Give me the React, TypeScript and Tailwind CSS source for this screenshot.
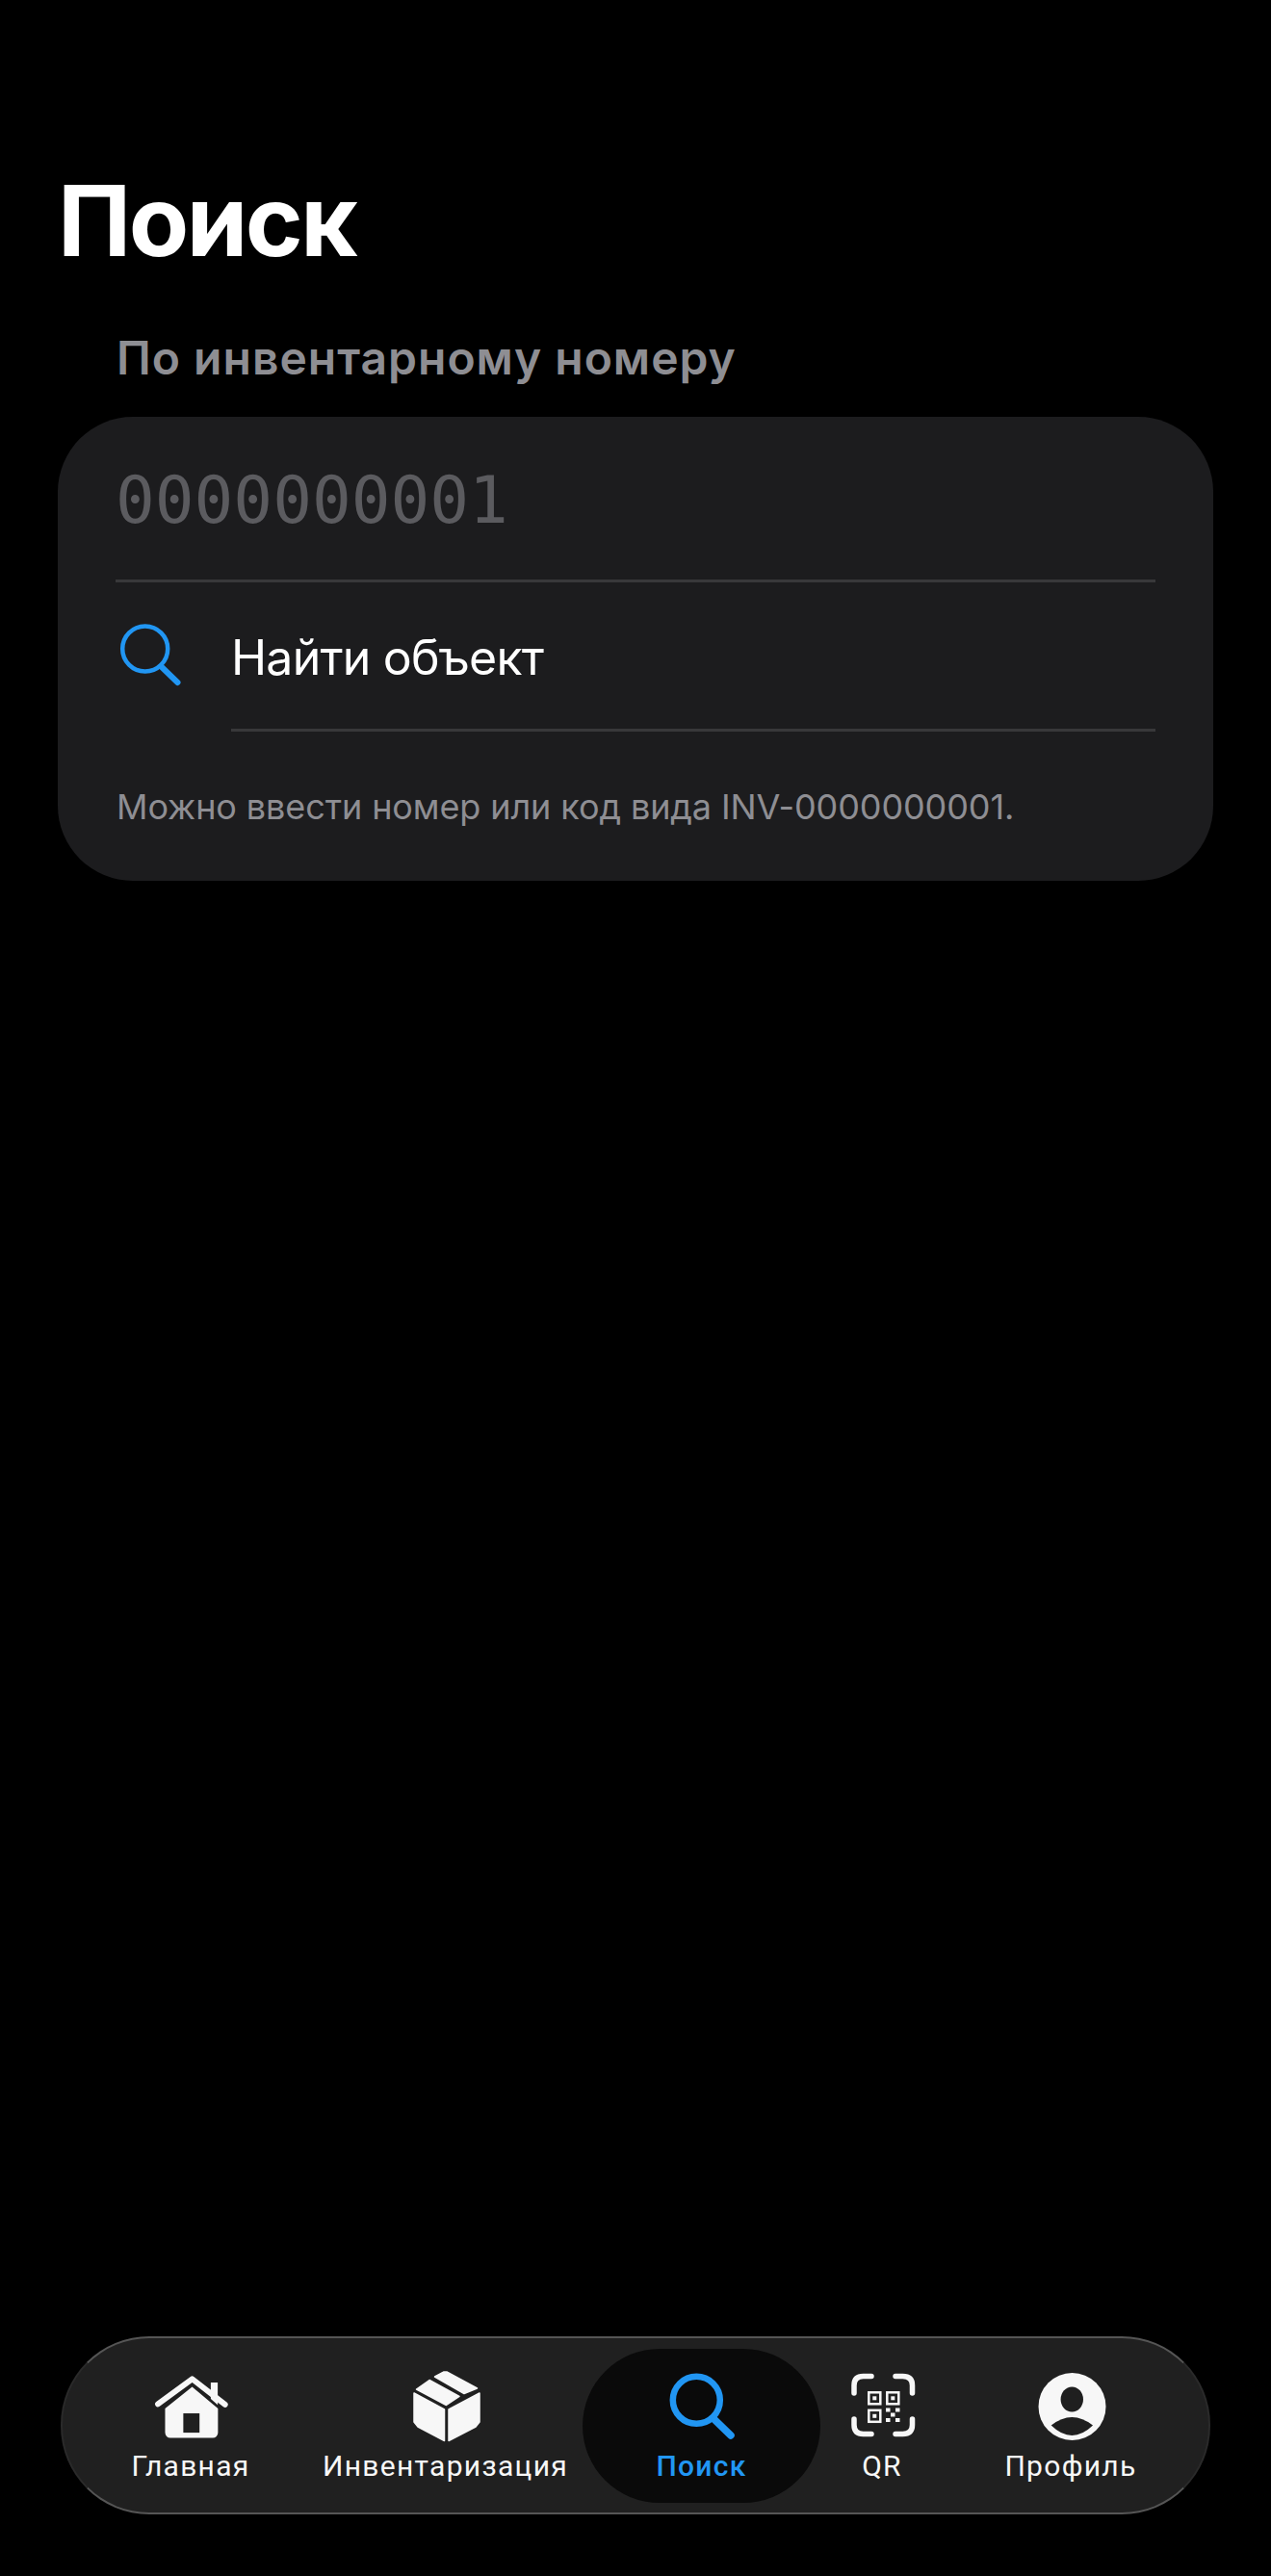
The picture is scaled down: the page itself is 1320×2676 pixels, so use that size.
import type { ReactNode } from "react";

const tabs: { label: string; width: string; shift: string; active?: boolean; icon: ReactNode }[] = [
  { label: "Главная", width: "w-[244px]", shift: "translate-x-[2px]", icon: <HomeIcon /> },
  { label: "Инвентаризация", width: "w-[285px]", shift: "translate-x-[2px]", icon: <BoxIcon /> },
  { label: "Поиск", width: "w-[247px]", shift: "translate-x-[6px]", active: true, icon: <NavSearchIcon /> },
  { label: "QR", width: "w-[128px]", shift: "translate-x-[4px]", icon: <QrIcon /> },
  { label: "Профиль", width: "w-[264px]", shift: "translate-x-[3px]", icon: <ProfileIcon /> },
];

function HomeIcon() {
  return (
    <svg width="100" height="90" viewBox="0 0 100 90" fill="none">
      <path d="M71 16h8v26l-8-7z" fill="#f7f7f7" />
      <path d="M49.5 21 79.3 46v28a6 6 0 0 1-6 6H24.3a6 6 0 0 1-6-6V46z" fill="#f7f7f7" />
      <path d="M10 41 49.5 12 87.5 41.500" stroke="#f7f7f7" strokeWidth="6.500" strokeLinecap="round" strokeLinejoin="round" />
      <rect x="39.300" y="51.700" width="18.700" height="22.300" fill="#1f1f1f" />
    </svg>
  );
}

function BoxIcon() {
  return (
    <svg width="90" height="90" viewBox="0 0 90 90" fill="#f7f7f7" stroke="#f7f7f7" strokeWidth="1.500" strokeLinejoin="round">
      <path d="M10 30 41.500 47V79.500L14 65 10 60z" />
      <path d="M46 47 78 30V60L74 65 46 79.500z" />
      <path d="M12.500 26 26 16.500 57 33.500 43.500 42.500z" />
      <path d="M31.500 13 41 8 44 8 75.500 25 62 30.500z" />
    </svg>
  );
}

function NavSearchIcon() {
  return (
    <svg width="90" height="90" viewBox="0 0 90 90" fill="none" stroke="#2196f3" strokeLinecap="round">
      <circle cx="33.300" cy="37.300" r="24.500" strokeWidth="6.500" />
      <path d="M52 57.500 69 74" strokeWidth="7.500" />
    </svg>
  );
}

function QrIcon() {
  return (
    <svg width="90" height="90" viewBox="0 0 90 90" fill="none">
      <g stroke="#f7f7f7" strokeWidth="5.500" strokeLinecap="round">
        <path d="M12 30V22Q12 12.500 21.500 12.500H30" />
        <path d="M55 12.500H62.500Q72.500 12.500 72.500 22V30" />
        <path d="M12 57V63Q12 72.500 21.500 72.500H30" />
        <path d="M55 72.500H62.500Q72.500 72.500 72.500 63V57" />
      </g>
      <g stroke="#f7f7f7" strokeWidth="2.500">
        <rect x="27.300" y="29.300" width="12" height="12" />
        <rect x="46.300" y="29.300" width="12" height="12" />
        <rect x="27.300" y="47.800" width="12" height="12" />
      </g>
      <g fill="#f7f7f7">
        <rect x="31.300" y="33.300" width="4" height="4" />
        <rect x="50.300" y="33.300" width="4" height="4" />
        <rect x="31.300" y="51.800" width="4" height="4" />
        <rect x="45" y="45.500" width="4.500" height="4" />
        <rect x="55" y="45.500" width="4.500" height="4" />
        <rect x="50" y="50.500" width="4.500" height="4" />
        <rect x="45" y="56" width="4.500" height="4" />
        <rect x="55" y="56" width="4.500" height="4" />
      </g>
    </svg>
  );
}

function ProfileIcon() {
  return (
    <svg width="90" height="90" viewBox="0 0 90 90">
      <circle cx="43.500" cy="44" r="35" fill="#f7f7f7" />
      <ellipse cx="43.300" cy="36.500" rx="11.700" ry="13" fill="#1f1f1f" />
      <path d="M21.700 63.500Q43.300 46.500 65 63.500Q43.300 84.500 21.700 63.500z" fill="#1f1f1f" />
    </svg>
  );
}

export default function App() {
  return (
    <div className="flex h-[2676px] flex-col overflow-hidden bg-black font-['Inter',sans-serif]">
      <main className="px-[60px] pt-[168px]">
        <h1 className="text-[102px] leading-[122px] font-bold tracking-[-2.500px] text-white">Поиск</h1>

        <h2 className="mt-[53px] pl-[61px] text-[48px] leading-[58px] font-semibold tracking-[1px] text-[#8e8e93]">
          По инвентарному номеру
        </h2>

        <section className="mt-[32px] h-[482px] rounded-[78px] bg-[#1c1c1e] px-[60px]">
          <div className="flex h-[172px] items-center border-b-[3px] border-[#38383a] pt-[5px] font-['DejaVu_Sans_Mono',monospace] text-[67.750px] text-[#5b5b5f]">
            0000000001
          </div>

          <div className="flex h-[155px] items-center">
            <svg width="90" height="90" viewBox="0 0 90 90" fill="none" stroke="#2196f3" strokeLinecap="round" className="ml-[-5px] shrink-0">
              <circle cx="35.700" cy="36" r="23.500" strokeWidth="4.500" />
              <path d="M53 55 69.500 71" strokeWidth="6" />
            </svg>
            <div className="ml-[35px] flex h-full flex-1 items-center border-b-[3px] border-[#38383a] pt-[5px] text-[50px] tracking-[-0.800px] text-white">
              Найти объект
            </div>
          </div>

          <p className="mt-[54px] ml-[1px] text-[36px] leading-[48px] tracking-[-0.100px] text-[#8e8e93]">
            Можно ввести номер или код вида INV-0000000001.
          </p>
        </section>
      </main>

      <nav className="mx-[63px] mt-auto mb-[64px] flex h-[185px] items-center rounded-[92px] border-2 border-[#2a2a2a] border-t-[#555555] border-b-[#555555] bg-[#202020] px-[11px] font-['Roboto',sans-serif]">
        {tabs.map((tab) => (
          <div
            key={tab.label}
            className={`flex h-[160px] shrink-0 flex-col items-center justify-start rounded-[80px] pt-[16px] ${tab.width} ${tab.active ? "bg-[#0a0a0a]" : ""}`}
          >
            <div className={`flex h-[90px] w-[90px] items-center justify-center ${tab.shift}`}>{tab.icon}</div>
            <span className={`mt-[-2px] text-[30px] leading-[36px] tracking-[1.300px] ${tab.active ? "font-medium text-[#2196f3]" : "font-normal text-[#f7f7f7]"}`}>
              {tab.label}
            </span>
          </div>
        ))}
      </nav>
    </div>
  );
}
